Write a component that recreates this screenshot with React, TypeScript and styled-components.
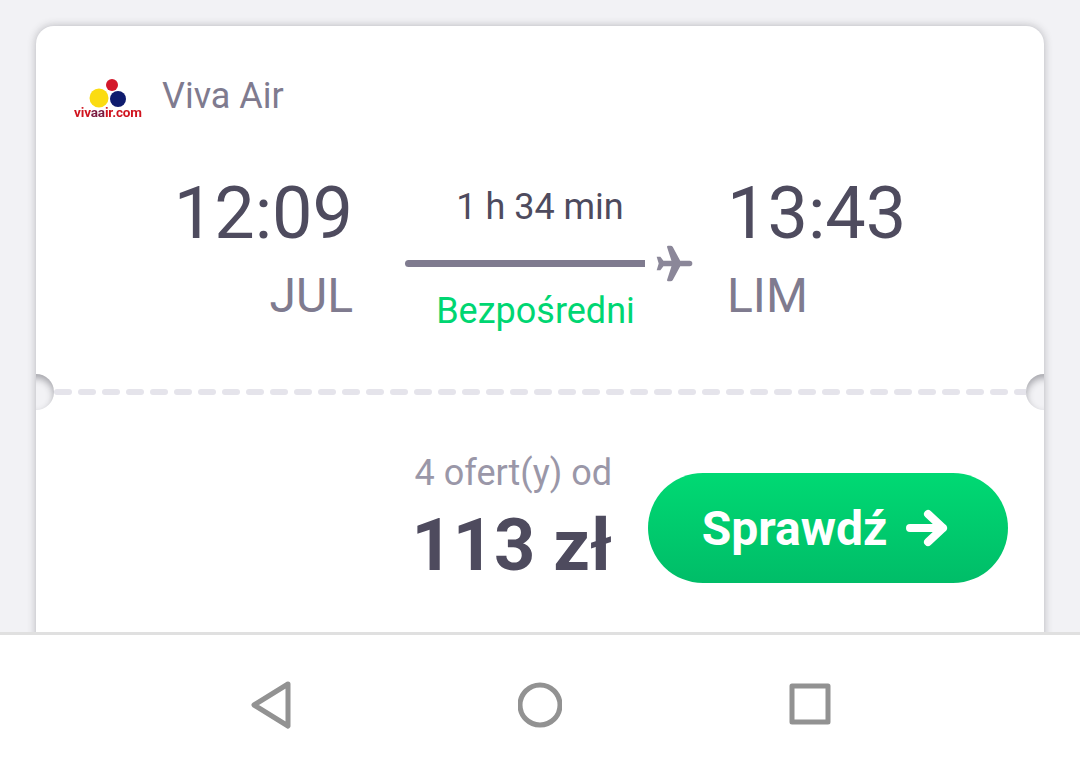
import React from 'react';
import styled, { createGlobalStyle } from 'styled-components';

const GlobalStyle = createGlobalStyle`
  html, body {
    margin: 0;
    padding: 0;
    height: 776px;
    overflow: hidden;
    background: #f2f2f5;
    font-family: Roboto, "Liberation Sans", sans-serif;
  }
`;

const Screen = styled.div`
  width: 1080px;
  height: 776px;
  display: flex;
  flex-direction: column;
  overflow: hidden;
`;

const Content = styled.main`
  height: 632px;
  flex: none;
  padding: 26px 36px 0;
  box-sizing: border-box;
  overflow: hidden;
`;

const Card = styled.article`
  position: relative;
  height: 640px;
  background: #fff;
  border-radius: 18px 18px 0 0;
  box-shadow: 0 0 8px rgba(40, 40, 50, 0.3);
`;

const Carrier = styled.header`
  height: 138px;
  padding: 35px 0 0 36px;
  box-sizing: border-box;
  display: flex;
  align-items: flex-start;
  gap: 18px;
`;

const CarrierName = styled.span`
  font-size: 36px;
  line-height: 68px;
  margin-top: 1px;
  color: #7f7b8f;
`;

const FlightRow = styled.section`
  display: flex;
  height: 225px;
`;

const Endpoint = styled.div<{ $side: 'from' | 'to' }>`
  display: flex;
  flex-direction: column;
  width: ${p => (p.$side === 'from' ? '317px' : 'auto')};
  align-items: ${p => (p.$side === 'from' ? 'flex-end' : 'flex-start')};
  margin-left: ${p => (p.$side === 'to' ? '34px' : '0')};
`;

const Time = styled.div`
  font-size: 72px;
  line-height: 84px;
  color: #4e4b5e;
  height: 84px;
  margin-top: 8px;
`;

const Airport = styled.div`
  font-size: 48px;
  line-height: 56px;
  color: #7f7b8f;
  margin-top: 12px;
`;

const Route = styled.div`
  width: 288px;
  margin-left: 52px;
  display: flex;
  flex-direction: column;
`;

const Duration = styled.div`
  width: 270px;
  text-align: center;
  font-size: 36px;
  line-height: 42px;
  color: #4e4b5e;
  margin-top: 22px;
`;

const RouteLine = styled.div`
  display: flex;
  align-items: center;
  height: 44px;
  margin-top: 13px;
`;

const Line = styled.div`
  flex: none;
  width: 240px;
  height: 7px;
  border-radius: 3.5px 0 0 3.5px;
  background: #7f7b8f;
`;

const PlaneIcon = styled.svg`
  width: 37px;
  height: 37px;
  flex: none;
  margin-left: 11px;
  fill: #8b8799;
`;

const Direct = styled.div`
  width: 261px;
  text-align: center;
  font-size: 36px;
  line-height: 42px;
  color: #00d672;
  margin-top: 5px;
`;

const Divider = styled.div`
  margin-left: 18px;
  height: 6px;
  width: 972px;
  display: flex;
  gap: 6px;
  overflow: hidden;
`;

const Dash = styled.span`
  flex: none;
  width: 18px;
  height: 6px;
  border-radius: 3px;
  background: #e5e4eb;
`;

const Notch = styled.span<{ $side: 'left' | 'right' }>`
  position: absolute;
  top: 348px;
  ${p => p.$side}: -18px;
  width: 36px;
  height: 36px;
  border-radius: 50%;
  background: #f2f2f5;
  box-shadow: inset 0 4px 7px rgba(40, 40, 50, 0.38);
  clip-path: ${p => (p.$side === 'left' ? 'inset(0 0 0 50%)' : 'inset(0 50% 0 0)')};
`;

const Offer = styled.section`
  display: flex;
  justify-content: flex-end;
  gap: 36px;
  padding: 78px 36px 0 0;
`;

const Price = styled.div`
  display: flex;
  flex-direction: column;
  align-items: flex-end;
`;

const OfferCount = styled.div`
  font-size: 36px;
  line-height: 42px;
  color: #9a97a8;
  margin-top: -21px;
`;

const Amount = styled.div`
  font-size: 72px;
  font-weight: 700;
  line-height: 84px;
  color: #4e4b5e;
  margin-top: 10px;
`;

const CheckButton = styled.button`
  width: 360px;
  height: 110px;
  border: 0;
  border-radius: 55px;
  background: linear-gradient(180deg, #00d973 0%, #00bd68 100%);
  color: #fff;
  font-family: inherit;
  font-size: 48px;
  font-weight: 700;
  display: flex;
  align-items: center;
  justify-content: center;
  gap: 19px;
  padding: 0 6px 0 0;
`;

const NavBar = styled.nav`
  flex: 1;
  background: #fff;
  border-top: 3px solid #e0e0e0;
  display: flex;
  align-items: flex-start;
  justify-content: center;
  gap: 226px;
  padding-top: 46px;
`;

const NavIcon = styled.svg`
  width: 44px;
  height: 48px;
  fill: none;
  stroke: #929292;
  stroke-width: 5;
  stroke-linejoin: round;
`;

const VivaLogo = () => (
  <svg width="72" height="62" viewBox="0 0 72 62">
    <circle cx="40" cy="24" r="6" fill="#d3182a" style={{ filter: 'blur(0.6px)' }} />
    <circle cx="27" cy="37" r="9.500" fill="#fbdc11" style={{ filter: 'blur(0.6px)' }} />
    <circle cx="46" cy="38" r="8" fill="#0f1c6e" style={{ filter: 'blur(0.6px)' }} />
    <text x="2" y="56" fontFamily="Roboto, sans-serif" fontSize="13.500" fontWeight="700" fill="#d0141f" textLength="68" style={{ filter: 'blur(0.5px)' }}>
      viv<tspan fill="#7a1a40">aa</tspan>ir.com
    </text>
  </svg>
);

export default function App() {
  return (
    <Screen>
      <GlobalStyle />
      <Content>
        <Card>
          <Carrier>
            <VivaLogo />
            <CarrierName>Viva Air</CarrierName>
          </Carrier>
          <FlightRow>
            <Endpoint $side="from">
              <Time>12:09</Time>
              <Airport>JUL</Airport>
            </Endpoint>
            <Route>
              <Duration>1 h 34 min</Duration>
              <RouteLine>
                <Line />
                <PlaneIcon viewBox="800 223 110 110">
                  <path d="M900 270H872L850 229Q848 225 843 225H836Q832 225 833 230L846 270H822L813 258H802L808 278L802 298H813L822 286H846L833 326Q832 331 836 331H843Q848 331 850 327L872 286H900Q908 286 908 278Q908 270 900 270Z" />
                </PlaneIcon>
              </RouteLine>
              <Direct>Bezpośredni</Direct>
            </Route>
            <Endpoint $side="to">
              <Time>13:43</Time>
              <Airport>LIM</Airport>
            </Endpoint>
          </FlightRow>
          <Divider>
            {Array.from({ length: 41 }, (_, i) => <Dash key={i} />)}
          </Divider>
          <Notch $side="left" />
          <Notch $side="right" />
          <Offer>
            <Price>
              <OfferCount>4 ofert(y) od</OfferCount>
              <Amount>113 zł</Amount>
            </Price>
            <CheckButton>
              Sprawdź
              <svg width="42" height="38" viewBox="0 0 42 38" fill="none" stroke="#fff" strokeWidth="8" strokeLinecap="round" strokeLinejoin="round">
                <path d="M4 19h33M22 5l15 14-15 14" />
              </svg>
            </CheckButton>
          </Offer>
        </Card>
      </Content>
      <NavBar>
        <NavIcon viewBox="0 0 44 48">
          <path d="M39 4 5 25l34 21z" transform="translate(1 -1)" />
        </NavIcon>
        <NavIcon viewBox="0 0 44 48">
          <circle cx="22" cy="24" r="20" />
        </NavIcon>
        <NavIcon viewBox="0 0 44 48">
          <rect x="4" y="5" width="36" height="36" />
        </NavIcon>
      </NavBar>
    </Screen>
  );
}
